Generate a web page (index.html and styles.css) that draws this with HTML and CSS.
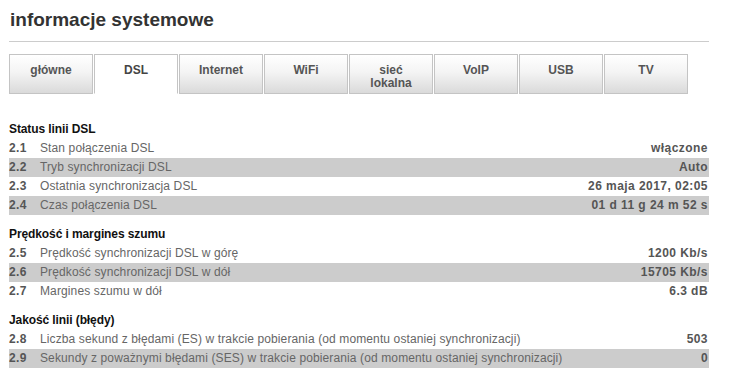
FILE: index.html
```html
<!DOCTYPE html>
<html lang="pl">
<head>
<meta charset="utf-8">
<link rel="stylesheet" href="styles.css">
</head>
<body>
<div class="page">
  <h1 class="title">informacje systemowe</h1>
  <nav class="tabs">
    <div class="tab">główne</div>
    <div class="tab active">DSL</div>
    <div class="tab">Internet</div>
    <div class="tab">WiFi</div>
    <div class="tab">sieć<br>lokalna</div>
    <div class="tab">VoIP</div>
    <div class="tab">USB</div>
    <div class="tab">TV</div>
  </nav>

  <section class="group first">
    <h2 class="group-title">Status linii DSL</h2>
    <div class="row"><span class="num">2.1</span><span class="label">Stan połączenia DSL</span><span class="value">włączone</span></div>
    <div class="row alt"><span class="num">2.2</span><span class="label">Tryb synchronizacji DSL</span><span class="value">Auto</span></div>
    <div class="row"><span class="num">2.3</span><span class="label">Ostatnia synchronizacja DSL</span><span class="value">26 maja 2017, 02:05</span></div>
    <div class="row alt"><span class="num">2.4</span><span class="label">Czas połączenia DSL</span><span class="value">01 d 11 g 24 m 52 s</span></div>
  </section>

  <section class="group">
    <h2 class="group-title">Prędkość i margines szumu</h2>
    <div class="row"><span class="num">2.5</span><span class="label">Prędkość synchronizacji DSL w górę</span><span class="value">1200 Kb/s</span></div>
    <div class="row alt"><span class="num">2.6</span><span class="label">Prędkość synchronizacji DSL w dół</span><span class="value">15705 Kb/s</span></div>
    <div class="row"><span class="num">2.7</span><span class="label">Margines szumu w dół</span><span class="value">6.3 dB</span></div>
  </section>

  <section class="group">
    <h2 class="group-title">Jakość linii (błędy)</h2>
    <div class="row"><span class="num">2.8</span><span class="label">Liczba sekund z błędami (ES) w trakcie pobierania (od momentu ostaniej synchronizacji)</span><span class="value">503</span></div>
    <div class="row alt"><span class="num">2.9</span><span class="label">Sekundy z poważnymi błędami (SES) w trakcie pobierania (od momentu ostaniej synchronizacji)</span><span class="value">0</span></div>
  </section>
</div>
</body>
</html>
```

FILE: styles.css
```css
html, body {
  margin: 0;
  padding: 0;
  background: #fff;
}
body {
  font-family: "Liberation Sans", Arial, sans-serif;
  font-size: 12px;
  color: #555;
}
.page {
  width: 700px;
  padding: 0 0 0 9px;
}
.title {
  margin: 0;
  padding: 8px 0 0 1px;
  height: 33px;
  font-size: 19px;
  line-height: 24px;
  font-weight: bold;
  color: #333;
  border-bottom: 1px solid #cccccc;
}
.tabs {
  display: flex;
  gap: 1px;
  margin-top: 12px;
}
.tab {
  box-sizing: border-box;
  width: 84px;
  height: 40px;
  padding-top: 9px;
  border: 1px solid #c4c4c4;
  background: linear-gradient(#ffffff 0%, #f4f4f4 45%, #dadada 100%);
  text-align: center;
  font-weight: bold;
  font-size: 12px;
  line-height: 13px;
  color: #555;
}
.tab.active {
  background: #fff;
  border-bottom-color: #fff;
  color: #444;
}
.group {
  margin-top: 9px;
}
.group.first {
  margin-top: 25px;
}
.group-title {
  margin: 0;
  height: 20px;
  line-height: 20px;
  font-size: 12px;
  font-weight: bold;
  color: #111;
  letter-spacing: -0.1px;
}
.row {
  display: flex;
  align-items: center;
  height: 19px;
  line-height: 19px;
}
.row.alt {
  background: #cccccc;
}
.num {
  width: 31px;
  flex: none;
  font-weight: bold;
  color: #555;
  letter-spacing: 0.4px;
}
.label {
  flex: 1;
  color: #666;
  letter-spacing: 0.12px;
}
.value {
  flex: none;
  font-weight: bold;
  color: #555;
  padding-right: 1px;
  letter-spacing: 0.45px;
}
```
